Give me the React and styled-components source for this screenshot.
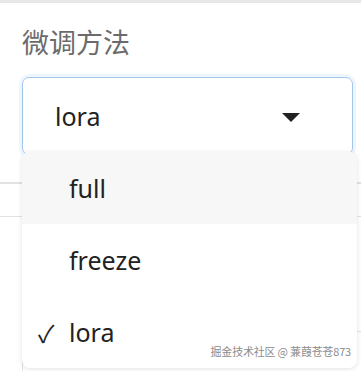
import styled, { createGlobalStyle } from "styled-components";

const GlobalStyle = createGlobalStyle`
  html, body {
    margin: 0;
    padding: 0;
    background: #ffffff;
    font-family: "Noto Sans", "Noto Sans CJK SC", sans-serif;
  }
`;

const Page = styled.div`
  position: relative;
  width: 361px;
  height: 371px;
  overflow: hidden;
  border-top: 3px solid #e7e7e7;
  box-sizing: border-box;
`;

const Field = styled.div`
  display: flex;
  flex-direction: column;
  gap: 17px;
  padding: 21px 8px 0 22px;
`;

const Label = styled.div`
  font-family: "Noto Sans CJK SC", sans-serif;
  font-size: 27px;
  line-height: 36px;
  color: #6b6b6b;
`;

const SelectBox = styled.div`
  height: 78px;
  box-sizing: border-box;
  border: 1.5px solid #a3c6ef;
  border-radius: 7px;
  box-shadow: 0 0 0 3px rgba(120, 170, 235, 0.12);
  display: flex;
  align-items: center;
  justify-content: space-between;
  padding: 0 52px 0 32px;
  font-size: 25px;
  color: #222;
`;

const Caret = styled.span`
  width: 0;
  height: 0;
  border-left: 9px solid transparent;
  border-right: 9px solid transparent;
  border-top: 9px solid #222;
  margin-top: 2px;
`;

const Divider = styled.div`
  height: 1.5px;
  background: #e2e2e2;
  margin-top: ${(p) => p.$gap}px;
`;

const BehindBox = styled.div`
  margin: 114px 0 0 22px;
  height: 60px;
  border-left: 1.5px solid #e2e2e2;
  border-top: 1.5px solid #e2e2e2;
  padding: 26px 0 0 32px;
  font-size: 25px;
  color: #222;
`;

const Menu = styled.ul`
  position: absolute;
  top: 149px;
  left: 22px;
  width: 335px;
  margin: 0;
  padding: 0;
  list-style: none;
  background: #ffffff;
  border-radius: 8px;
  box-shadow: 0 1px 5px rgba(0, 0, 0, 0.12);
  overflow: hidden;
`;

const Option = styled.li`
  position: relative;
  height: 72px;
  display: flex;
  align-items: center;
  padding-left: 47px;
  font-size: 25px;
  color: #222;
  background: ${(p) => (p.$hover ? "#f7f7f7" : "transparent")};
`;

const Check = styled.span`
  position: absolute;
  left: 16px;
  font-size: 24px;
`;

const Watermark = styled.div`
  position: absolute;
  right: 10px;
  bottom: 12px;
  font-family: "Noto Sans CJK SC", sans-serif;
  font-size: 11px;
  letter-spacing: -0.2px;
  color: #8c8c8c;
  text-shadow: 0 0 2px #fff;
`;

export default function App() {
  const options = ["full", "freeze", "lora"];
  const selected = "lora";
  return (
    <>
      <GlobalStyle />
      <Page>
        <Field>
          <Label>微调方法</Label>
          <SelectBox>
            <span>lora</span>
            <Caret />
          </SelectBox>
        </Field>
        <Divider $gap={27} />
        <Divider $gap={32} />
        <BehindBox>none</BehindBox>
        <Menu>
          {options.map((o, i) => (
            <Option key={o} $hover={i === 0}>
              {o === selected && <Check>✓</Check>}
              {o}
            </Option>
          ))}
        </Menu>
        <Watermark>掘金技术社区 @ 蒹葭苍苍873</Watermark>
      </Page>
    </>
  );
}
